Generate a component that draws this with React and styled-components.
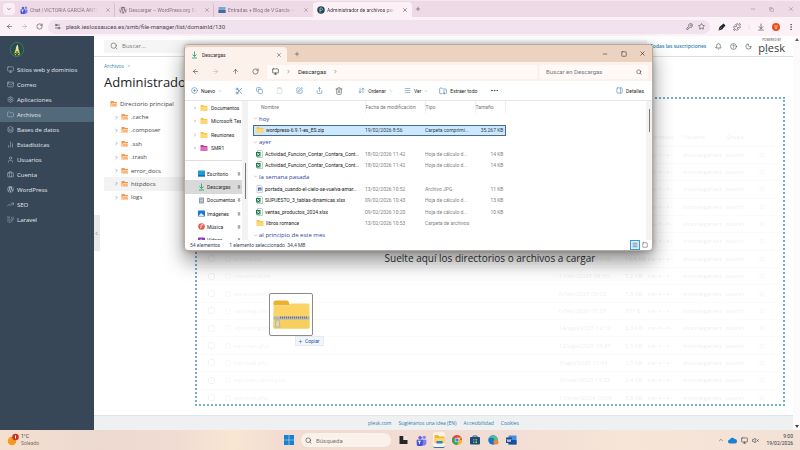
import styled, { createGlobalStyle } from 'styled-components'
import {
  ArrowDownToLine, ArrowDownUp, ArrowLeft, ArrowRight, ArrowUp, Bell, Briefcase, ChartNoAxesColumn,
  ChevronDown, ChevronLeft, ChevronRight, ChevronUp, CircleHelp, CirclePlus, Copy, Ellipsis,
  EllipsisVertical, Folder, FolderArchive, KeyRound, Layers, Mail, Menu, Minus, Monitor, Moon,
  PanelRight, Pin, Plus, Puzzle, RotateCw, Scissors, Search, Settings, Share, Settings2,
  Square, SquarePen, Star, Trash2, TrendingUp, User, VolumeX, X, Clipboard,
} from 'lucide-react'
import { FaLaravel, FaWordpress } from 'react-icons/fa'

const GlobalStyle = createGlobalStyle`
  * { box-sizing: border-box; }
  body {
    margin: 0;
    font-family: Roboto, 'Noto Sans', sans-serif;
    font-size: 6px;
    color: #303942;
    overflow: hidden;
  }
  button, input {
    font: inherit;
    color: inherit;
    border: 0;
    padding: 0;
    margin: 0;
    background: none;
  }
  input { min-width: 0; outline: none; }
  input::placeholder { color: #777; opacity: 1; }
  a { text-decoration: none; color: #2e7fae; }
  ul { list-style: none; margin: 0; padding: 0; }
  svg { display: block; flex: none; }
`

const Screen = styled.div`
  position: relative;
  height: 100vh;
  display: flex;
  flex-direction: column;
  background: #fff;
`

const IconButton = styled.button`
  display: flex;
  align-items: center;
  justify-content: center;
  width: ${(p) => p.$w || 12}px;
  height: 12px;
  flex: none;
  color: ${(p) => p.$color || '#444'};
`

/* ---------- browser ---------- */

const TabStrip = styled.div`
  display: flex;
  align-items: center;
  height: 17px;
  padding: 0 0 0 3px;
  background: #eed9e6;
  border-top: 1px solid #f6e8f0;
  font-size: 5px;
`

const TabChevron = styled(IconButton)`
  background: #fbeef5;
  border-radius: 4px;
  margin-right: 1px;
`

const Tab = styled.div`
  display: flex;
  align-items: center;
  gap: 2px;
  width: ${(p) => p.$w}px;
  height: 15px;
  padding: 0 3px 0 4px;
  margin-top: 1px;
  border-radius: 4px 4px 0 0;
  background: ${(p) => (p.$active ? '#fdf1f8' : 'transparent')};
  color: ${(p) => (p.$active ? '#3b353a' : '#85747f')};
  border-right: 1px solid ${(p) => (p.$line ? '#d5bfcd' : 'transparent')};
`

const TabLabel = styled.span`
  flex: 1;
  min-width: 0;
  margin-right: 5px;
  overflow: hidden;
  white-space: nowrap;
  mask-image: linear-gradient(90deg, #000 85%, transparent);
`

const Spacer = styled.div`
  flex: 1;
`

const Toolbar = styled.div`
  display: flex;
  align-items: center;
  gap: 3px;
  height: 19px;
  padding: 0 3px;
  background: #fdf1f8;
`

const Address = styled.div`
  flex: 1;
  display: flex;
  align-items: center;
  height: 14px;
  padding: 0 3px;
  margin-right: 3px;
  border-radius: 7px;
  background: #f1e2ed;
  input { flex: 1; padding-left: 3px; color: #50464e; }
`

const Avatar = styled(IconButton)`
  width: 8px;
  height: 8px;
  margin: 0 2px;
  border-radius: 50%;
  background: #e8501c;
  color: #fff;
  font-size: 5px;
`

/* ---------- plesk ---------- */

const Page = styled.div`
  flex: 1;
  min-height: 0;
  display: flex;
  font-family: 'Open Sans', 'Noto Sans', sans-serif;
`

const SideNav = styled.nav`
  width: 94px;
  flex: none;
  background: #374758;
  padding-top: 5px;
`

const NavLogo = styled.div`
  padding: 0 9px 4px;
`

const NavItem = styled.a`
  display: flex;
  align-items: center;
  gap: 3px;
  height: 15px;
  padding-left: 7px;
  color: #e3e8ec;
  background: ${(p) => (p.$active ? '#52697b' : 'transparent')};
  svg { color: #a9b6c1; }
`

const Main = styled.main`
  flex: 1;
  min-width: 0;
  display: flex;
  flex-direction: column;
`

const TopBar = styled.div`
  display: flex;
  align-items: center;
  gap: 3px;
  height: 21px;
  padding: 0 8px 0 10px;
  border-bottom: 1px solid #dedede;
  color: #777;
`

const SearchBox = styled.label`
  flex: 1;
  display: flex;
  align-items: center;
  gap: 4px;
  height: 13px;
  padding-left: 6px;
  background: #f5f5f5;
  color: #666;
`

const Subs = styled.a`
  margin-right: 3px;
  font-size: 5px;
  font-weight: 600;
`

const Brand = styled.div`
  margin-left: 1px;
  text-align: center;
  color: #3a3a3a;
  font-size: 11px;
  line-height: 12px;
  small { display: block; font-size: 3px; line-height: 4px; }
  u { text-decoration-color: #4fb3d9; text-decoration-thickness: 1px; }
`

const Crumbs = styled.div`
  display: flex;
  align-items: center;
  gap: 3px;
  height: 9px;
  margin: 4px 10px 0;
  font-size: 5px;
`

const Title = styled.h1`
  margin: 2px 10px 0;
  font-size: 13px;
  line-height: 20px;
  font-weight: 400;
  color: #222;
`

const Columns = styled.div`
  flex: 1;
  min-height: 0;
  display: flex;
  padding: 5px 8px 9px 0;
`

const Handle = styled.button`
  align-self: flex-start;
  display: flex;
  align-items: center;
  width: 6px;
  height: 36px;
  margin-top: 118px;
  background: #e9e9e9;
`

const Tree = styled.ul`
  display: grid;
  grid-auto-rows: 1fr;
  width: 96px;
  height: 107px;
  margin-left: 4px;
`

const TreeItem = styled.li`
  display: flex;
  align-items: center;
  gap: 2px;
  padding-left: ${(p) => (p.$root ? 6 : 10)}px;
  background: ${(p) => (p.$active ? '#f3f3f3' : 'transparent')};
  color: #444;
`

const DropZone = styled.section`
  position: relative;
  flex: 1;
  margin-left: -5px;
  border: 2px dotted #73adcf;
  overflow: hidden;
`

const DropHint = styled.p`
  position: absolute;
  left: 0;
  right: 0;
  top: 50%;
  margin: 0;
  line-height: 12px;
  text-align: center;
  font-size: 10px;
  color: #333;
`

const FileTable = styled.table`
  width: 100%;
  height: 278px;
  margin-top: 30px;
  table-layout: fixed;
  border-collapse: collapse;
  opacity: 0.09;
  td, th { height: 17px; padding: 0; text-align: left; font-weight: 400; white-space: nowrap; }
  tr { border-bottom: 1px solid #ddd; }
  input { display: block; width: 7px; height: 7px; margin-left: 11px; }
`

const FileName = styled.span`
  display: flex;
  align-items: center;
  gap: 3px;
  color: #2e7fae;
`

const Footer = styled.footer`
  display: flex;
  justify-content: center;
  align-items: center;
  gap: 7px;
  height: 15px;
  background: #eff0f1;
  border-top: 1px solid #e0e2e3;
  font-size: 5px;
`

const PageScroll = styled.div`
  width: 7px;
  display: flex;
  flex-direction: column;
  justify-content: space-between;
  align-items: center;
  padding: 2px 0;
  background: #fcfafb;
  color: #666;
`

const Drag = styled.div`
  position: absolute;
  left: 269px;
  top: 293px;
  display: flex;
  flex-direction: column;
`

const Thumb = styled.div`
  display: flex;
  align-items: center;
  justify-content: center;
  width: 44px;
  height: 43px;
  border: 1px solid #8b8b8b;
  border-radius: 2px;
  background: #fff;
`

const DragLabel = styled.span`
  display: flex;
  align-items: center;
  gap: 2px;
  margin-left: 26px;
  padding: 0 3px 0 2px;
  height: 10px;
  font-size: 5px;
  color: #2b4fa8;
  background: #f2f6fb;
  border: 1px solid #e5ebf3;
`

/* ---------- explorer ---------- */

const Explorer = styled.section`
  position: absolute;
  left: 184px;
  top: 44px;
  width: 469px;
  height: 207px;
  display: flex;
  flex-direction: column;
  border-radius: 4px;
  border: 1px solid #b9aaa2;
  background: #fff;
  box-shadow: 0 10px 20px rgba(0, 0, 0, 0.45), 0 0 5px rgba(0, 0, 0, 0.25);
  overflow: hidden;
  font-size: 5px;
  color: #2a2a2a;
`

const WinTitle = styled.header`
  display: flex;
  align-items: center;
  height: 17px;
  flex: none;
  background: #ebd2c1;
`

const WinTab = styled.div`
  display: flex;
  align-items: center;
  gap: 4px;
  width: 102px;
  height: 15px;
  margin-top: 2px;
  padding: 0 2px 0 6px;
  border-radius: 4px 4px 0 0;
  background: #fdf1ec;
  span { flex: 1; }
`

const WinAddress = styled.div`
  display: flex;
  align-items: center;
  gap: 8px;
  height: 19px;
  flex: none;
  padding: 0 4px;
  background: #fdf1ec;
`

const PathBox = styled.div`
  flex: 1;
  display: flex;
  align-items: center;
  gap: 7px;
  height: 14px;
  padding-left: 5px;
  margin-left: -2px;
  background: #fffaf8;
  border-radius: 2px;
  font-size: 6px;
`

const WinSearch = styled.label`
  display: flex;
  align-items: center;
  width: 108px;
  height: 14px;
  padding: 0 6px;
  margin-left: -5px;
  background: #fffaf8;
  border-radius: 2px;
  font-size: 6px;
  input { flex: 1; }
`

const Commands = styled.div`
  display: flex;
  align-items: center;
  gap: 8px;
  height: 20px;
  flex: none;
  padding: 0 8px 0 6px;
  border-bottom: 1px solid #e6e6e6;
`

const Command = styled.button`
  display: flex;
  align-items: center;
  gap: 3px;
  height: 12px;
  margin-left: ${(p) => p.$before || 0}px;
  margin-right: ${(p) => p.$after || 0}px;
  svg { color: #4c87b5; }
`

const WinBody = styled.div`
  flex: 1;
  min-height: 0;
  display: flex;
`

const Places = styled.div`
  width: 57px;
  height: 100%;
  overflow: hidden;
`

const PlaceList = styled.ul`
  display: grid;
  grid-auto-rows: 1fr;
  height: ${(p) => p.$h}px;
  & + & { border-top: 1px solid #ddd; margin-top: 5px; padding-top: 6px; }
`

const Place = styled.li`
  display: flex;
  align-items: center;
  gap: ${(p) => (p.$fixed ? 2 : 3)}px;
  overflow: hidden;
  white-space: nowrap;
  padding: 0 1px 0 ${(p) => (p.$fixed ? 13 : 8)}px;
  background: ${(p) => (p.$active ? '#d9d9d9' : 'transparent')};
  span { flex: 1; overflow: hidden; }
`

const Scroll = styled.div`
  width: 6px;
  display: flex;
  justify-content: center;
  background: #f3f3f3;
  &::before {
    content: '';
    width: 1px;
    height: ${(p) => p.$h}px;
    margin-top: ${(p) => p.$top}px;
    background: #777;
  }
`

const ListPane = styled.div`
  flex: 1;
  min-width: 0;
  padding-left: 5px;
`

const List = styled.table`
  width: 253px;
  height: 140px;
  table-layout: fixed;
  border-collapse: collapse;
  color: #7f7f7f;
  line-height: 8px;
  td, th { padding: 0; text-align: left; font-weight: 400; white-space: nowrap; overflow: hidden; }
  thead th { height: 12px; color: #777; border-right: 1px solid #eee; }
  thead th:first-child { padding-left: 8px; }
  td:last-child { text-align: right; padding-right: 2px; }
`

const Group = styled.th`
  height: 11px;
  font-family: 'Open Sans', sans-serif;
  font-size: 6px;
  color: #3440a0;
  div { display: flex; align-items: center; gap: 1px; }
  svg { color: #8a8a8a; }
`

const Entry = styled.tr`
  background: ${(p) => (p.$selected ? '#cce8ff' : 'transparent')};
  outline: ${(p) => (p.$selected ? '1px solid #4b6e88' : 'none')};
  outline-offset: -1px;
  color: ${(p) => (p.$selected ? '#33424e' : 'inherit')};
  td { height: 11px; }
`

const EntryName = styled.div`
  display: flex;
  align-items: center;
  gap: 2px;
  width: 110px;
  padding-left: 3px;
  color: #222;
  span { overflow: hidden; text-overflow: ellipsis; }
`

const Status = styled.div`
  display: flex;
  align-items: center;
  gap: 9px;
  height: 10px;
  flex: none;
  padding: 0 2px 0 5px;
  color: #3f4b57;
`

const ViewButton = styled.button`
  display: flex;
  align-items: center;
  justify-content: center;
  width: 10px;
  height: 10px;
  margin-left: ${(p) => (p.$on ? 0 : -9)}px;
  border: ${(p) => (p.$on ? '1px solid #3c9cd6' : 0)};
  background: ${(p) => (p.$on ? '#d5ebf9' : 'none')};
`

/* ---------- taskbar ---------- */

const Taskbar = styled.div`
  display: grid;
  grid-template-columns: 1fr auto 1fr;
  align-items: center;
  height: 20px;
  flex: none;
  padding: 0 7px;
  font-size: 5px;
  background: linear-gradient(90deg, #f5e0d0 0%, #ecd9d0 12%, #f1dcd3 22%, #f8e6d2 29%, #f2dbd1 36%, #f1dcd3 60%, #f7e5d8 78%, #f4e1d6 100%);
`

const Weather = styled.div`
  display: flex;
  align-items: center;
  gap: 2px;
  line-height: 7px;
  small { display: block; font-size: 5px; color: #7b706b; }
`

const Apps = styled.div`
  display: flex;
  align-items: center;
  gap: 6px;
`

const TaskSearch = styled.label`
  display: flex;
  align-items: center;
  gap: 4px;
  width: 90px;
  height: 14px;
  padding-left: 4px;
  border-radius: 7px;
  background: #fbf1eb;
  font-size: 6px;
`

const Tray = styled.div`
  display: flex;
  justify-content: flex-end;
  align-items: center;
  gap: 4px;
  line-height: 7px;
  text-align: right;
`

const Clock = styled.div`
  margin-left: 3px;
`

const AppButton = styled.button`
  display: flex;
  align-items: center;
  justify-content: center;
  width: 12px;
  height: 16px;
  border-radius: 2px;
  background: ${(p) => (p.$open ? '#fcf1e8' : 'none')};
  border-bottom: ${(p) => (p.$open ? '1px solid #2877b5' : '0')};
`

/* ---------- drawings ---------- */

function FolderIcon({ color = '#f9c63f', size = 8 }) {
  return (
    <svg width={size} height={size} viewBox="0 0 16 16">
      <path d="M1 3q0-1 1-1h4l2 2h6q1 0 1 1v8q0 1-1 1H2q-1 0-1-1z" fill={color} />
      <path d="M1 6h14v7q0 1-1 1H2q-1 0-1-1z" fill="#fff" opacity=".3" />
    </svg>
  )
}

function TreeFolder() {
  return (
    <svg width="8" height="8" viewBox="0 0 16 16">
      <path d="M1 2h6l1 2h6v9q0 1-1 1H2q-1 0-1-1z" fill="#f79646" />
      <path d="M4 7h11l-2 6H2z" fill="#fbb477" stroke="#fff" strokeWidth="1" />
    </svg>
  )
}

function SheetIcon() {
  return (
    <svg width="7" height="8" viewBox="0 0 14 16">
      <path d="M3 1h8l2 2v12H3z" fill="#fff" stroke="#6fa987" />
      <rect y="4" width="9" height="9" fill="#19764a" />
      <path d="m2 6 5 5M7 6l-5 5" stroke="#fff" strokeWidth="1.6" />
    </svg>
  )
}

function ImageFileIcon() {
  return (
    <svg width="7" height="8" viewBox="0 0 14 16">
      <path d="M2 1h8l3 3v11H2z" fill="#fff" stroke="#9aa8bd" />
      <path d="M4 5h7v7H4z" fill="#4870ae" />
      <path d="m5 11 3-3 2 3z" fill="#fff" />
    </svg>
  )
}

function DownloadIcon() {
  return (
    <svg width="7" height="8" viewBox="0 0 14 16">
      <path d="M7 1v10M3 7l4 4 4-4M2 14h10" fill="none" stroke="#27a27d" strokeWidth="1.8" />
    </svg>
  )
}

function TeamsIcon({ size = 8 }) {
  return (
    <svg width={size} height={size} viewBox="0 0 16 16">
      <circle cx="6" cy="4" r="2.6" fill="#5a63dd" />
      <circle cx="12" cy="3.4" r="2.4" fill="#7d85f0" />
      <path d="M8 7h7v5a4 4 0 0 1-7 2z" fill="#7c7df0" />
      <path d="M1 7h9v5a4 4 0 0 1-9 1z" fill="#4554d4" />
      <path d="M3 9h4M5 9v4" stroke="#fff" strokeWidth="1.4" />
    </svg>
  )
}

function PleskTabIcon() {
  return (
    <svg width="8" height="8" viewBox="0 0 16 16">
      <circle cx="8" cy="8" r="7.5" fill="#2d4154" />
      <path d="M6 13V4h3a2.6 2.6 0 0 1 0 5H6" fill="none" stroke="#87c8df" strokeWidth="1.8" />
    </svg>
  )
}

function SchoolLogo() {
  return (
    <svg width="16" height="17" viewBox="0 0 32 36">
      <ellipse cx="16" cy="18" rx="14" ry="15" fill="#2c4a4a" stroke="#337c74" strokeWidth="2" />
      <path d="M12 30c-3-6 1-9 2-16 0-4 4-5 5-1 0 7 5 10 2 17z" fill="#c7cc4c" />
      <path d="M17 7c3 5 0 9 1 14l-4 4c1-7-1-12 3-18z" fill="#e9e6b8" />
      <path d="M16 21v10M12 26l4 3 4-3" stroke="#22352b" strokeWidth="2" fill="none" />
    </svg>
  )
}

function ZipFolder() {
  return (
    <svg width="37" height="29" viewBox="0 0 74 58">
      <path d="M1 5q0-4 4-4h22q4 0 5 4l2 6H1z" fill="#eeb02c" />
      <path d="M1 12h30l6-5h34q2 0 2 2v46q0 2-2 2H3q-2 0-2-2z" fill="#fbd465" />
      <path d="M1 35h72v20q0 2-2 2H3q-2 0-2-2z" fill="#f6cf5c" />
      <path d="M1 36h72" stroke="#aeb4c0" strokeWidth="6" />
      <path d="M14 35h54" stroke="#6e7380" strokeWidth="4" strokeDasharray="2 2" />
      <path d="M6 40h6l2 14H4z" fill="#d9d5c6" stroke="#9b9a93" />
    </svg>
  )
}

function PlaceIcon({ kind }) {
  if (kind === 'down') return <DownloadIcon />
  const fills = { desk: '#1f9ad6', doc: '#8d9db0', img: '#1e76cf', music: '#dd5a4e', video: '#8e3cc0' }
  return (
    <svg width="7" height="7" viewBox="0 0 14 14">
      {kind === 'music' ? <circle cx="7" cy="7" r="6.5" fill={fills[kind]} /> : <rect x={kind === 'doc' ? 2 : 0} y="1" width={kind === 'doc' ? 10 : 14} height="12" rx="1" fill={fills[kind]} />}
      {kind === 'desk' && <path d="M0 10h14v3H0z" fill="#1770ad" />}
      {kind === 'doc' && <path d="M4 4h6M4 7h6M4 10h6" stroke="#fff" />}
      {kind === 'img' && <path d="m1 12 5-6 7 6z" fill="#d7eefc" />}
      {kind === 'music' && <path d="M6 10V4l4-1v2M5 10h1" stroke="#fff" strokeWidth="1.6" fill="none" />}
      {kind === 'video' && <path d="m5 4 5 3-5 3z" fill="#fff" />}
    </svg>
  )
}

function AppIcon({ kind }) {
  if (kind === 'teams') return <TeamsIcon size={11} />
  if (kind === 'files') {
    return (
      <svg width="11" height="11" viewBox="0 0 22 22">
        <path d="M1 4q0-2 2-2h5l3 3h8q2 0 2 2v11H1z" fill="#f5b62c" />
        <path d="M1 8h20v9H1z" fill="#fcd769" />
        <path d="M5 14h12v5H5z" fill="#2b84cf" />
      </svg>
    )
  }
  if (kind === 'chrome') {
    return (
      <svg width="10" height="10" viewBox="0 0 20 20">
        <circle cx="10" cy="10" r="10" fill="#e8453c" />
        <path d="M10 10 1.3 5A10 10 0 0 0 10 20l5-9z" fill="#33a852" />
        <path d="M10 10h9.9a10 10 0 0 1-9.9 10l5-9L18.7 5H10z" fill="#fbc116" />
        <circle cx="10" cy="10" r="4.6" fill="#fff" />
        <circle cx="10" cy="10" r="3.6" fill="#4285f4" />
      </svg>
    )
  }
  if (kind === 'store') {
    return (
      <svg width="10" height="10" viewBox="0 0 20 20">
        <path d="M6 5V2h8v3" fill="none" stroke="#1e6fa9" strokeWidth="2" />
        <rect y="4" width="20" height="15" rx="2" fill="#174e7c" />
        <path d="M6 8h3v3H6z" fill="#ef5a33" />
        <path d="M11 8h3v3h-3z" fill="#84bd34" />
        <path d="M6 13h3v3H6z" fill="#2fa6e5" />
        <path d="M11 13h3v3h-3z" fill="#f7bf2d" />
      </svg>
    )
  }
  if (kind === 'edge') {
    return (
      <svg width="11" height="10" viewBox="0 0 22 20">
        <circle cx="10" cy="10" r="9.5" fill="#1976c5" />
        <path d="M1 8C3-2 18-2 19.500 9c0 4-6 4-7 2 2-6-8-7-11.500-3z" fill="#43c49a" />
        <circle cx="16" cy="14" r="5" fill="#e8893a" />
      </svg>
    )
  }
  if (kind === 'word') {
    return (
      <svg width="11" height="10" viewBox="0 0 22 20">
        <rect x="5" y="1" width="16" height="18" rx="1" fill="#3f8fdc" />
        <path d="M5 10h16v8q0 1-1 1H5z" fill="#1b4f9c" />
        <rect y="5" width="12" height="11" rx="1" fill="#1d4591" />
        <path d="m2 8 2 6 2-5 2 5 2-6" fill="none" stroke="#fff" strokeWidth="1.4" />
      </svg>
    )
  }
  return (
    <svg width="9" height="10" viewBox="0 0 18 20">
      <path d="M1 2h8v8h8v8H1z" fill="#262626" />
      <path d="M9 2h8v8H9z" fill="#e8e8e8" />
    </svg>
  )
}

/* ---------- data ---------- */

const navItems = [
  ['Sitios web y dominios', Monitor],
  ['Correo', Mail],
  ['Aplicaciones', Settings],
  ['Archivos', Folder],
  ['Bases de datos', Layers],
  ['Estadísticas', ChartNoAxesColumn],
  ['Usuarios', User],
  ['Cuenta', Briefcase],
  ['WordPress', FaWordpress],
  ['SEO', TrendingUp],
  ['Laravel', FaLaravel],
]

const folders = ['.cache', '.composer', '.ssh', '.trash', 'error_docs', 'httpdocs', 'logs']

const siteFiles = [
  ['..', '', ''],
  ['wp-admin', '03/feb/2026 20:06', ''],
  ['wp-content', '19/feb/2026 08:41', ''],
  ['wp-includes', '03/feb/2026 20:06', ''],
  ['.htaccess', '19/feb/2026 08:40', '0,5 KB'],
  ['index.php', '06/feb/2020 07:33', '405 B'],
  ['license.txt', '01/ene/2026 01:02', '19,4 KB'],
  ['readme.html', '11/dic/2025 09:36', '7,2 KB'],
  ['wp-activate.php', '6/feb/2025 06:02', '7,3 KB'],
  ['wp-blog.php', '6/feb/2020 07:33', '351 B'],
  ['wp-config.php', '14/ago/2025 12:19', '2,3 KB'],
  ['wp-cron.php', '12/ago/2025 18:47', '5,5 KB'],
  ['wp-load.php', '3/ago/2025 11:44', '2,5 KB'],
  ['wp-links-opml.php', '30/abr/2025 15:22', '2,4 KB'],
  ['wp-mail.php', '11/mar/2024 10:05', '3,8 KB'],
]

const rows = [
  { group: 'hoy' },
  { name: 'wordpress-6.9.1-es_ES.zip', date: '19/02/2026 8:56', type: 'Carpeta comprimi...', size: '35.267 KB', icon: 'folder', selected: true },
  { group: 'ayer' },
  { name: 'Actividad_Funcion_Contar_Contara_Cont...', date: '18/02/2026 11:42', type: 'Hoja de cálculo d...', size: '14 KB', icon: 'sheet' },
  { name: 'Actividad_Funcion_Contar_Contara_Cont...', date: '18/02/2026 11:42', type: 'Hoja de cálculo d...', size: '14 KB', icon: 'sheet' },
  { group: 'la semana pasada' },
  { name: 'portada_cuando-el-cielo-se-vuelva-amar...', date: '13/02/2026 10:52', type: 'Archivo JPG', size: '11 KB', icon: 'image' },
  { name: 'SUPUESTO_3_tablas-dinamicas.xlsx', date: '09/02/2026 10:43', type: 'Hoja de cálculo d...', size: '13 KB', icon: 'sheet' },
  { name: 'ventas_productos_2024.xlsx', date: '09/02/2026 10:20', type: 'Hoja de cálculo d...', size: '10 KB', icon: 'sheet' },
  { name: 'libros romance', date: '13/02/2026 10:53', type: 'Carpeta de archivos', size: '', icon: 'folder' },
  { group: 'al principio de este mes' },
]

const rowIcons = { folder: FolderIcon, sheet: SheetIcon, image: ImageFileIcon }

const places = [
  ['Escritorio', 'desk'],
  ['Descargas', 'down'],
  ['Documentos', 'doc'],
  ['Imágenes', 'img'],
  ['Música', 'music'],
  ['Vídeos', 'video'],
]

function Browser() {
  return (
    <>
      <TabStrip>
        <TabChevron aria-label="Buscar pestañas"><ChevronDown size={6} /></TabChevron>
        <Tab $w={99} $line><TeamsIcon /><TabLabel>Chat | VICTORIA GARCÍA ANTÓN</TabLabel><X size={6} /></Tab>
        <Tab $w={99} $line><FaWordpress size={8} /><TabLabel>Descargar – WordPress.org Español</TabLabel><X size={6} /></Tab>
        <Tab $w={99}>
          <svg width="8" height="8" viewBox="0 0 16 16"><path d="M1 2h14v12H1z" fill="#7fa6cf" /><path d="M1 8h14v6H1z" fill="#416e9e" /></svg>
          <TabLabel>Entradas + Blog de V García — WordPress</TabLabel><X size={6} />
        </Tab>
        <Tab $w={99} $active><PleskTabIcon /><TabLabel>Administrador de archivos para ies</TabLabel><X size={6} /></Tab>
        <IconButton aria-label="Nueva pestaña"><Plus size={6} /></IconButton>
        <Spacer />
        <IconButton $w={19} $color="#8a7b84" aria-label="Minimizar"><Minus size={6} /></IconButton>
        <IconButton $w={19} $color="#8a7b84" aria-label="Restaurar"><Copy size={5} /></IconButton>
        <IconButton $w={19} $color="#8a7b84" aria-label="Cerrar"><X size={6} /></IconButton>
      </TabStrip>
      <Toolbar>
        <IconButton aria-label="Atrás"><ArrowLeft size={7} /></IconButton>
        <IconButton $color="#b5a6af" aria-label="Adelante"><ArrowRight size={7} /></IconButton>
        <IconButton aria-label="Recargar"><RotateCw size={7} /></IconButton>
        <Address>
          <IconButton aria-label="Información del sitio"><Settings2 size={7} /></IconButton>
          <input aria-label="Dirección" defaultValue="plesk.ieslossauces.es/smb/file-manager/list/domainId/130" />
          <IconButton aria-label="Contraseñas"><KeyRound size={7} /></IconButton>
          <IconButton aria-label="Favorito"><Star size={7} /></IconButton>
        </Address>
        <IconButton $color="#222" aria-label="Editor">
          <svg width="8" height="8" viewBox="0 0 16 16"><path d="m1 15 2-7 8-7 4 4-7 8z" fill="#20252b" /><path d="m3 13 5-5" stroke="#8fa6b8" /></svg>
        </IconButton>
        <IconButton aria-label="Extensiones"><Puzzle size={8} /></IconButton>
        <IconButton $w={6} $color="#dccad5" aria-hidden="true">|</IconButton>
        <IconButton aria-label="Descargas"><ArrowDownToLine size={8} /></IconButton>
        <Avatar aria-label="Perfil">V</Avatar>
        <IconButton aria-label="Menú"><EllipsisVertical size={8} /></IconButton>
      </Toolbar>
    </>
  )
}

function Plesk() {
  return (
    <Page>
      <SideNav>
        <NavLogo><SchoolLogo /></NavLogo>
        {navItems.map(([label, Icon]) => (
          <NavItem key={label} href="#" $active={label === 'Archivos'}><Icon size={7} />{label}</NavItem>
        ))}
      </SideNav>
      <Main>
        <TopBar>
          <SearchBox><Search size={8} /><input aria-label="Buscar" placeholder="Buscar..." /></SearchBox>
          <Subs href="#">Todas las suscripciones</Subs>
          <IconButton aria-label="Avisos"><Bell size={7} /></IconButton>
          <IconButton aria-label="Ayuda"><CircleHelp size={7} /></IconButton>
          <IconButton aria-label="Tema"><Moon size={7} /></IconButton>
          <Brand><small>POWERED BY</small>p<u>l</u>esk</Brand>
        </TopBar>
        <Crumbs><a href="#">Archivos</a><ChevronRight size={4} /></Crumbs>
        <Title>Administrador de archivos</Title>
        <Columns>
          <Handle aria-label="Contraer"><ChevronLeft size={5} /></Handle>
          <Tree>
            <TreeItem $root><TreeFolder />Directorio principal</TreeItem>
            {folders.map((f) => (
              <TreeItem key={f} $active={f === 'httpdocs'}><ChevronRight size={5} /><TreeFolder />{f}</TreeItem>
            ))}
          </Tree>
          <DropZone>
            <FileTable>
              <colgroup>
                <col width="28" /><col /><col width="66" /><col width="23" /><col width="35" /><col width="43" /><col width="33" /><col width="24" />
              </colgroup>
              <thead>
                <tr><th /><th>Nombre</th><th>Modificado</th><th>Tamaño</th><th>Permisos</th><th>Usuario</th><th>Grupo</th><th /></tr>
              </thead>
              <tbody>
                {siteFiles.map(([name, date, size]) => (
                  <tr key={name}>
                    <td><input type="checkbox" aria-label={name} /></td>
                    <td><FileName><Square size={6} />{name}</FileName></td>
                    <td>{date}</td>
                    <td>{size}</td>
                    <td>rw- r-- r--</td>
                    <td>victoriagarant</td>
                    <td>psacln</td>
                    <td><Menu size={6} /></td>
                  </tr>
                ))}
              </tbody>
            </FileTable>
            <DropHint>Suelte aquí los directorios o archivos a cargar</DropHint>
          </DropZone>
        </Columns>
        <Footer>
          <a href="#">plesk.com</a>
          <a href="#">Sugiéranos una idea (EN)</a>
          <a href="#">Accesibilidad</a>
          <a href="#">Cookies</a>
        </Footer>
      </Main>
      <PageScroll>
        <svg width="4" height="3" viewBox="0 0 4 3"><path d="M0 3 2 0l2 3z" fill="#666" /></svg>
        <svg width="4" height="3" viewBox="0 0 4 3"><path d="M0 0h4L2 3z" fill="#444" /></svg>
      </PageScroll>
    </Page>
  )
}

function FileExplorer() {
  return (
    <Explorer>
      <WinTitle>
        <WinTab><DownloadIcon /><span>Descargas</span><IconButton aria-label="Cerrar pestaña"><X size={6} /></IconButton></WinTab>
        <IconButton $w={20} aria-label="Nueva pestaña"><Plus size={6} /></IconButton>
        <Spacer />
        <IconButton $w={19} $color="#222" aria-label="Minimizar"><Minus size={6} /></IconButton>
        <IconButton $w={19} $color="#222" aria-label="Maximizar"><Square size={6} /></IconButton>
        <IconButton $w={19} $color="#222" aria-label="Cerrar"><X size={7} /></IconButton>
      </WinTitle>
      <WinAddress>
        <IconButton aria-label="Atrás"><ArrowLeft size={7} /></IconButton>
        <IconButton $color="#c1b3ad" aria-label="Adelante"><ArrowRight size={7} /></IconButton>
        <IconButton aria-label="Subir"><ArrowUp size={7} /></IconButton>
        <IconButton aria-label="Actualizar"><RotateCw size={7} /></IconButton>
        <PathBox><Monitor size={7} /><ChevronRight size={5} />Descargas<ChevronRight size={5} /></PathBox>
        <WinSearch><input aria-label="Buscar en Descargas" placeholder="Buscar en Descargas" /><Search size={6} /></WinSearch>
      </WinAddress>
      <Commands>
        <Command $after={3}><CirclePlus size={7} />Nuevo<ChevronDown size={4} /></Command>
        <IconButton $color="#4c87b5" aria-label="Cortar"><Scissors size={8} /></IconButton>
        <IconButton $color="#4c87b5" aria-label="Copiar"><Copy size={7} /></IconButton>
        <IconButton $color="#ccc" aria-label="Pegar"><Clipboard size={7} /></IconButton>
        <IconButton $color="#4c87b5" aria-label="Cambiar nombre"><SquarePen size={7} /></IconButton>
        <IconButton $color="#4c87b5" aria-label="Compartir"><Share size={7} /></IconButton>
        <IconButton $color="#666" aria-label="Eliminar"><Trash2 size={8} /></IconButton>
        <Command $before={5}><ArrowDownUp size={7} />Ordenar<ChevronDown size={4} /></Command>
        <Command $before={3} $after={3}><Menu size={7} />Ver<ChevronDown size={4} /></Command>
        <Command $after={3}><FolderArchive size={8} />Extraer todo</Command>
        <IconButton aria-label="Más"><Ellipsis size={9} /></IconButton>
        <Spacer />
        <Command><PanelRight size={7} />Detalles</Command>
      </Commands>
      <WinBody>
        <Places>
          <PlaceList $h={54}>
            {['Documentos', 'Microsoft Teams', 'Reuniones', 'SMR1'].map((p) => (
              <Place key={p}><ChevronRight size={4} /><FolderIcon color={p === 'SMR1' ? '#c7359f' : undefined} /><span>{p}</span></Place>
            ))}
          </PlaceList>
          <PlaceList $h={87}>
            {places.map(([label, kind]) => (
              <Place key={label} $fixed $active={kind === 'down'}><PlaceIcon kind={kind} /><span>{label}</span><Pin size={4} /></Place>
            ))}
          </PlaceList>
        </Places>
        <Scroll $top={62} $h={36} />
        <ListPane>
          <List>
            <colgroup><col width="112" /><col width="60" /><col width="50" /><col /></colgroup>
            <thead><tr><th>Nombre</th><th>Fecha de modificación</th><th>Tipo</th><th>Tamaño</th></tr></thead>
            <tbody>
              {rows.map((r, i) => {
                if (r.group) return <tr key={i}><Group colSpan={4}><div><ChevronDown size={5} />{r.group}</div></Group></tr>
                const Icon = rowIcons[r.icon]
                return (
                  <Entry key={i} $selected={r.selected}>
                    <td><EntryName><Icon /><span>{r.name}</span></EntryName></td>
                    <td>{r.date}</td>
                    <td>{r.type}</td>
                    <td>{r.size}</td>
                  </Entry>
                )
              })}
            </tbody>
          </List>
        </ListPane>
        <Scroll $top={8} $h={23} />
      </WinBody>
      <Status>
        <span>54 elementos</span>
        <span>1 elemento seleccionado&nbsp; 34,4 MB</span>
        <Spacer />
        <ViewButton $on aria-label="Vista detalles"><Menu size={6} /></ViewButton>
        <ViewButton aria-label="Vista iconos"><Square size={6} /></ViewButton>
      </Status>
    </Explorer>
  )
}

export default function App() {
  return (
    <Screen>
      <GlobalStyle />
      <Browser />
      <Plesk />
      <Taskbar>
        <Weather>
          <svg width="12" height="14" viewBox="0 0 24 28">
            <circle cx="10" cy="16" r="8.5" fill="#f39a21" />
            <circle cx="17" cy="8" r="6.5" fill="#c9321f" />
            <path d="M17 5v6" stroke="#fff" strokeWidth="2" />
          </svg>
          <div>1°C<small>Soleado</small></div>
        </Weather>
        <Apps>
          <AppButton aria-label="Inicio">
            <svg width="10" height="10" viewBox="0 0 10 10"><path d="M0 0h4.700v4.700H0zM5.300 0H10v4.700H5.300zM0 5.300h4.700V10H0zM5.300 5.300H10V10H5.300z" fill="#1383d3" /></svg>
          </AppButton>
          <TaskSearch><Search size={7} /><input aria-label="Búsqueda" placeholder="Búsqueda" /></TaskSearch>
          {['desks', 'teams', 'files', 'chrome', 'store', 'edge', 'word'].map((k) => (
            <AppButton key={k} $open={k === 'files'} aria-label={k}><AppIcon kind={k} /></AppButton>
          ))}
        </Apps>
        <Tray>
          <ChevronUp size={6} />
          <svg width="9" height="7" viewBox="0 0 18 14"><path d="M4 13a4 4 0 0 1 0-8 5 5 0 0 1 9-1 4.500 4.500 0 0 1 1 9z" fill="#1681d5" /></svg>
          <Monitor size={7} />
          <VolumeX size={7} />
          <Clock>9:00<br />19/02/2026</Clock>
        </Tray>
      </Taskbar>
      <Drag>
        <Thumb><ZipFolder /></Thumb>
        <DragLabel><Plus size={5} />Copiar</DragLabel>
      </Drag>
      <FileExplorer />
    </Screen>
  )
}
